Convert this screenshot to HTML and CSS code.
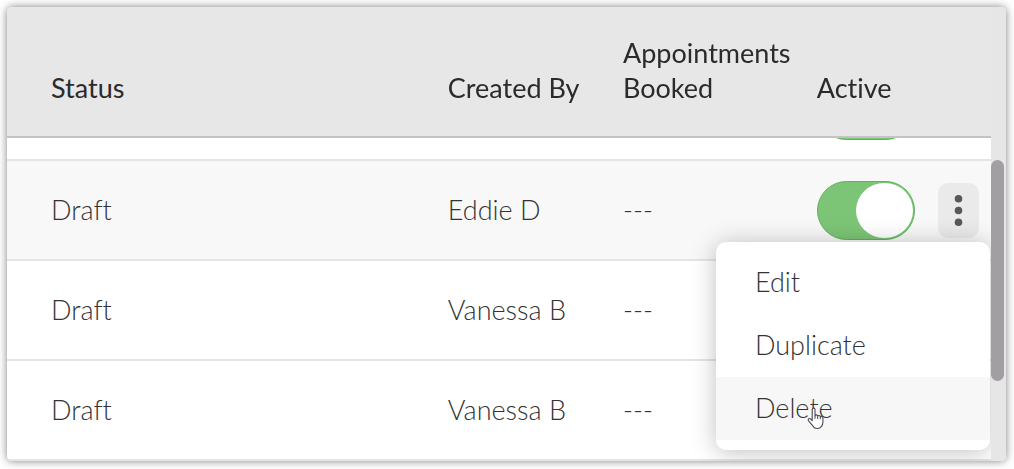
FILE: index.html
```html
<!DOCTYPE html>
<html lang="en">
<head>
    <meta charset="UTF-8">
    <meta name="viewport" content="width=device-width, initial-scale=1.0">
    <title>Status</title>
    <link rel="stylesheet" href="styles.css">
</head>
<body>
    <div class="panel">
        <div class="table-scroll">
            <table class="list-table">
                <thead>
                    <tr>
                        <th class="col-status">Status</th>
                        <th class="col-creator">Created By</th>
                        <th class="col-booked">Appointments Booked</th>
                        <th class="col-active" id="active-label">Active</th>
                        <th class="col-actions"></th>
                    </tr>
                </thead>
                <tbody>
                    <tr>
                        <td></td>
                        <td></td>
                        <td></td>
                        <td class="control"><input class="toggle" type="checkbox" aria-labelledby="active-label" checked></td>
                        <td></td>
                    </tr>
                    <tr class="selected">
                        <td>Draft</td>
                        <td>Eddie D</td>
                        <td>---</td>
                        <td class="control"><input class="toggle" type="checkbox" aria-labelledby="active-label" checked></td>
                        <td class="control actions">
                            <button class="more-button" type="button" aria-haspopup="menu" aria-expanded="true" aria-controls="row-menu">
                                <svg width="9" height="33" viewBox="0 0 9 33" fill="#585858">
                                    <circle cx="4.5" cy="4.8" r="3.8"/>
                                    <circle cx="4.5" cy="16.5" r="3.8"/>
                                    <circle cx="4.5" cy="28.2" r="3.8"/>
                                </svg>
                            </button>
                            <div class="menu" id="row-menu">
                                <button class="menu-item" type="button">Edit</button>
                                <button class="menu-item" type="button">Duplicate</button>
                                <button class="menu-item hover" type="button">Delete
                                    <svg class="pointer" width="18" height="23" viewBox="0 0 18 23">
                                        <path d="M5.2 2.6c0-2 2.8-2 2.8 0v6.2c.3-1.3 2.6-1.2 2.7.3.5-1 2.5-.8 2.6.7.6-.8 2.6-.5 2.6 1.3v4.2c0 2.6-2.1 6.2-5.3 6.2-2.9 0-4.3-1.3-5.2-3.2L1.4 13.7c-.8-1.7 1-2.9 2.3-1.7l1.5 1.6z" fill="#fff" stroke="#4a4858" stroke-width="1.1" stroke-linejoin="round"/>
                                        <path d="M8 8.8v3M10.7 9.1v3M13.3 9.8v2.5" fill="none" stroke="#4a4858" stroke-width="1"/>
                                    </svg>
                                </button>
                            </div>
                        </td>
                    </tr>
                    <tr>
                        <td>Draft</td>
                        <td>Vanessa B</td>
                        <td>---</td>
                        <td></td>
                        <td></td>
                    </tr>
                    <tr>
                        <td>Draft</td>
                        <td>Vanessa B</td>
                        <td>---</td>
                        <td></td>
                        <td></td>
                    </tr>
                </tbody>
            </table>
        </div>
        <div class="scrollbar">
            <div class="scrollbar-thumb"></div>
        </div>
    </div>

    <script>
        // Start at the end of the list
        const list = document.querySelector('.table-scroll');
        list.scrollTop = list.scrollHeight;
    </script>
</body>
</html>
```
FILE: styles.css
```css
* {
    margin: 0;
    padding: 0;
    box-sizing: border-box;
}

body {
    height: 100vh;
    padding: 7px 8px 8px 7px;
    background: #fff;
    color: #333;
    font-family: Lato, "Open Sans", sans-serif;
    font-size: 27px;
    font-weight: 300;
    font-variant-ligatures: none;
    line-height: 35px;
}

.panel {
    display: flex;
    height: 100%;
    border-radius: 5px;
    overflow: hidden;
    background: #fff;
    box-shadow: 0 0 8px rgba(0, 0, 0, 0.5);
}

.table-scroll {
    flex: 1;
    overflow-y: auto;
    overflow-x: hidden;
    scrollbar-width: none;
}

.list-table {
    width: 100%;
    table-layout: fixed;
    border-collapse: separate;
    border-spacing: 0;
    text-align: left;
}

.list-table th {
    position: sticky;
    top: 0;
    z-index: 1;
    padding: 28px 0 31px;
    vertical-align: bottom;
    background: #e7e7e7;
    border-bottom: 2px solid #c4c4c4;
    color: #2b2b2b;
    font-weight: 400;
}

.list-table td {
    height: 100px;
    padding-bottom: 2px;
    border-bottom: 2px solid #e4e4e4;
    vertical-align: middle;
}

.list-table th:first-child,
.list-table td:first-child {
    padding-left: 44px;
}

.list-table .control {
    padding-bottom: 0;
}

.col-status {
    width: 44.8%;
}

.col-creator {
    width: 17.8%;
}

.col-booked {
    width: 19.7%;
}

.col-active {
    width: 12.3%;
}

.selected td {
    background: #f8f8f8;
}

.toggle {
    display: block;
    width: 98px;
    height: 59px;
    padding: 1px;
    appearance: none;
    border: 1px solid #5cb258;
    border-radius: 30px;
    background: #7cc576;
    cursor: pointer;
}

.toggle::before {
    content: "";
    display: block;
    width: 57px;
    height: 55px;
    border-radius: 50%;
    background: #fff;
}

.toggle:checked::before {
    margin-left: auto;
}

.actions {
    position: relative;
}

.more-button {
    display: flex;
    align-items: center;
    justify-content: center;
    width: 41px;
    height: 55px;
    border: none;
    border-radius: 10px;
    background: #eaeaea;
    cursor: pointer;
}

.menu {
    position: absolute;
    top: 81px;
    right: 1px;
    width: 274px;
    padding: 9px 0 10px;
    border-radius: 10px;
    background: #fff;
    box-shadow: 0 2px 24px rgba(0, 0, 0, 0.25);
}

.menu-item {
    position: relative;
    display: block;
    width: 100%;
    height: 63px;
    padding: 0 39px 2px;
    border: none;
    background: none;
    color: inherit;
    font: inherit;
    font-variant-ligatures: none;
    text-align: left;
    cursor: pointer;
}

.menu-item:hover,
.menu-item.hover {
    background: #f7f7f7;
}

.pointer {
    position: absolute;
    top: 30px;
    left: 91px;
}

.scrollbar {
    width: 15px;
    padding: 153px 2px 0 0;
    background: #e6e6e6;
}

.scrollbar-thumb {
    height: 221px;
    border-radius: 7px;
    background: #a19fa2;
}
```
